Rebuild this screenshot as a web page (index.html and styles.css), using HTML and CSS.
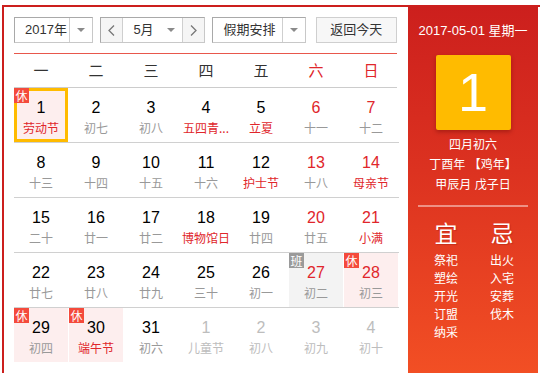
FILE: index.html
```html
<!DOCTYPE html>
<html lang="zh-CN">
<head>
<meta charset="utf-8">
<title>万年历</title>
<link rel="stylesheet" href="styles.css">
</head>
<body>
<div class="cal">
  <div class="main">
    <div class="toolbar">
      <div class="sel sel-year"><span class="sel-text">2017年</span><span class="sel-arrow"><i class="tri"></i></span></div>
      <div class="month-group">
        <span class="nav"><svg width="7" height="11" viewBox="0 0 7 11"><path d="M6 0.5 L1 5.5 L6 10.5" fill="none" stroke="#777" stroke-width="1.3"/></svg></span>
        <span class="month"><span>5月</span><i class="tri"></i></span>
        <span class="nav nav-next"><svg width="7" height="11" viewBox="0 0 7 11"><path d="M1 0.5 L6 5.5 L1 10.5" fill="none" stroke="#777" stroke-width="1.3"/></svg></span>
      </div>
      <div class="sel sel-hol"><span class="sel-text">假期安排</span><span class="sel-arrow"><i class="tri"></i></span></div>
      <span class="today">返回今天</span>
    </div>

    <div class="week">
      <span>一</span><span>二</span><span>三</span><span>四</span><span>五</span><span class="we">六</span><span class="we">日</span>
    </div>

    <div class="row">
      <div class="cell hol sel-day"><i class="badge">休</i><b>1</b><em class="fest">劳动节</em></div>
      <div class="cell"><b>2</b><em>初七</em></div>
      <div class="cell"><b>3</b><em>初八</em></div>
      <div class="cell"><b>4</b><em class="fest">五四青...</em></div>
      <div class="cell"><b>5</b><em class="fest">立夏</em></div>
      <div class="cell wkend"><b>6</b><em>十一</em></div>
      <div class="cell wkend"><b>7</b><em>十二</em></div>
    </div>
    <div class="row">
      <div class="cell"><b>8</b><em>十三</em></div>
      <div class="cell"><b>9</b><em>十四</em></div>
      <div class="cell"><b>10</b><em>十五</em></div>
      <div class="cell"><b>11</b><em>十六</em></div>
      <div class="cell"><b>12</b><em class="fest">护士节</em></div>
      <div class="cell wkend"><b>13</b><em>十八</em></div>
      <div class="cell wkend"><b>14</b><em class="fest">母亲节</em></div>
    </div>
    <div class="row">
      <div class="cell"><b>15</b><em>二十</em></div>
      <div class="cell"><b>16</b><em>廿一</em></div>
      <div class="cell"><b>17</b><em>廿二</em></div>
      <div class="cell"><b>18</b><em class="fest">博物馆日</em></div>
      <div class="cell"><b>19</b><em>廿四</em></div>
      <div class="cell wkend"><b>20</b><em>廿五</em></div>
      <div class="cell wkend"><b>21</b><em class="fest">小满</em></div>
    </div>
    <div class="row">
      <div class="cell"><b>22</b><em>廿七</em></div>
      <div class="cell"><b>23</b><em>廿八</em></div>
      <div class="cell"><b>24</b><em>廿九</em></div>
      <div class="cell"><b>25</b><em>三十</em></div>
      <div class="cell"><b>26</b><em>初一</em></div>
      <div class="cell wkend work"><i class="badge badge-work">班</i><b>27</b><em>初二</em></div>
      <div class="cell wkend hol"><i class="badge">休</i><b>28</b><em>初三</em></div>
    </div>
    <div class="row row-last">
      <div class="cell hol"><i class="badge">休</i><b>29</b><em>初四</em></div>
      <div class="cell hol"><i class="badge">休</i><b>30</b><em class="fest">端午节</em></div>
      <div class="cell"><b>31</b><em>初六</em></div>
      <div class="cell other"><b>1</b><em>儿童节</em></div>
      <div class="cell other"><b>2</b><em>初八</em></div>
      <div class="cell other"><b>3</b><em>初九</em></div>
      <div class="cell other"><b>4</b><em>初十</em></div>
    </div>
  </div>

  <div class="side">
    <div class="side-date">2017-05-01 星期一</div>
    <div class="big-day">1</div>
    <div class="lunar">
      <p>四月初六</p>
      <p>丁酉年 【鸡年】</p>
      <p>甲辰月 戊子日</p>
    </div>
    <div class="divider"></div>
    <div class="yiji">
      <div class="col">
        <h3>宜</h3>
        <p>祭祀</p><p>塑绘</p><p>开光</p><p>订盟</p><p>纳采</p>
      </div>
      <div class="col">
        <h3>忌</h3>
        <p>出火</p><p>入宅</p><p>安葬</p><p>伐木</p>
      </div>
    </div>
  </div>
</div>
</body>
</html>
```

FILE: styles.css
```css
* { box-sizing: border-box; }
html, body { margin: 0; padding: 0; background: #fff; }
body {
  font-family: "Liberation Sans", "Noto Sans CJK SC", sans-serif;
  color: #333;
}
.cal {
  margin: 5px 0 0 2px;
  width: 538px;
  height: 368px;
  display: flex;
  border-top: 2px solid #cc1f1d;
  border-left: 2px solid #cc1f1d;
}
.main {
  width: 404px;
  padding: 10px 11px 0 10px;
}
.toolbar {
  display: flex;
  height: 26px;
  font-size: 13px;
  line-height: 24px;
}
.sel, .month-group {
  display: flex;
  height: 26px;
  border: 1px solid;
  border-color: #a9a9a9 #c8c8c8 #c8c8c8 #a9a9a9;
  background: #fff;
}
.sel-text { padding-left: 10px; }
.sel-arrow {
  display: flex;
  align-items: center;
  justify-content: center;
  border-left: 1px solid #cfcfcf;
}
.sel-year { width: 80px; }
.sel-year .sel-text { width: 54px; }
.sel-year .sel-arrow { width: 23px; }
.sel-hol { width: 94px; margin-left: 7px; }
.sel-hol .sel-text { width: 69px; }
.sel-hol .sel-arrow { width: 22px; }
.tri {
  display: block;
  width: 0;
  height: 0;
  border-left: 4px solid transparent;
  border-right: 4px solid transparent;
  border-top: 4px solid #8a8a8a;
}
.month-group { width: 105px; margin-left: 7px; }
.nav {
  width: 22px;
  display: flex;
  align-items: center;
  justify-content: center;
  background: #f5f5f5;
  border-right: 1px solid #cfcfcf;
}
.nav-next { border-right: 0; border-left: 1px solid #cfcfcf; width: 22px; }
.month {
  width: 59px;
  display: flex;
  align-items: center;
  padding-left: 10px;
}
.month .tri { margin-left: auto; margin-right: 7px; }
.today {
  margin-left: 10px;
  width: 82px;
  height: 26px;
  border: 1px solid #cfcfcf;
  background: #f7f7f7;
  text-align: center;
}

.week {
  margin-top: 10px;
  border-top: 1px solid #e8574c;
  border-bottom: 1px solid #cccccc;
  display: grid;
  grid-template-columns: repeat(7, 55px);
  height: 35px;
  font-family: "Noto Sans CJK SC", sans-serif;
  font-size: 15px;
  line-height: 32px;
  color: #333;
}
.week span { text-align: center; padding-right: 1px; }
.week .we { color: #e0262b; }

.row {
  display: grid;
  grid-template-columns: repeat(7, 54px);
  column-gap: 1px;
  border-bottom: 1px solid #d0d0d0;
  width: 385px;
}
.row-last { border-bottom: 0; }
.cell {
  position: relative;
  height: 54px;
  text-align: center;
  padding-top: 9px;
}
.cell b {
  display: block;
  font-weight: normal;
  font-size: 16px;
  line-height: 22px;
  color: #000;
  font-family: "Liberation Sans", sans-serif;
}
.cell em {
  display: block;
  font-style: normal;
  font-size: 12px;
  line-height: 18px;
  color: #999;
  white-space: nowrap;
  font-family: "Noto Sans CJK SC", sans-serif;
}
.cell em.fest { color: #e0262b; }
.wkend b { color: #e0262b; }
.other b, .other em { color: #bdbdbd; }
.hol { background: #fdeeee; }
.work { background: #f3f3f3; }
.sel-day { box-shadow: inset 0 0 0 3px #ffbb00; }
.badge {
  position: absolute;
  left: 0;
  top: 0;
  width: 15px;
  height: 15px;
  background: #f44a3c;
  color: #fff;
  font-style: normal;
  font-size: 12px;
  line-height: 15px;
  text-align: center;
  font-family: "Noto Sans CJK SC", sans-serif;
}
.badge-work { background: #9a9a9a; }

.side {
  width: 130px;
  margin-top: -2px;
  background: linear-gradient(180deg, #cc1f1d 0%, #dc3220 45%, #f24f24 100%);
  color: #fff;
  text-align: center;
  padding-top: 17px;
  font-family: "Liberation Sans", "Noto Sans CJK SC", sans-serif;
}
.side-date {
  font-size: 13px;
  line-height: 18px;
}
.big-day {
  width: 75px;
  height: 75px;
  margin: 15px auto 0;
  background: #ffbb00;
  border-radius: 2px;
  box-shadow: 0 2px 4px rgba(80, 0, 0, 0.35);
  font-size: 54px;
  line-height: 75px;
  color: #fff;
}
.lunar { margin-top: 5px; font-size: 12px; line-height: 20px; }
.lunar p { margin: 0; }
.divider {
  margin: 10px 10px 0;
  height: 2px;
  background: rgba(255, 255, 255, 0.45);
}
.yiji {
  display: grid;
  grid-template-columns: 46px 46px;
  column-gap: 10px;
  padding-left: 15px;
  margin-top: 12px;
}
.yiji h3 {
  margin: 0 0 3px;
  font-size: 23px;
  line-height: 30px;
  font-weight: normal;
  text-shadow: 1px 1px 1px rgba(120, 0, 0, 0.25);
}
.yiji p {
  margin: 0;
  font-size: 12px;
  line-height: 18px;
}
```
